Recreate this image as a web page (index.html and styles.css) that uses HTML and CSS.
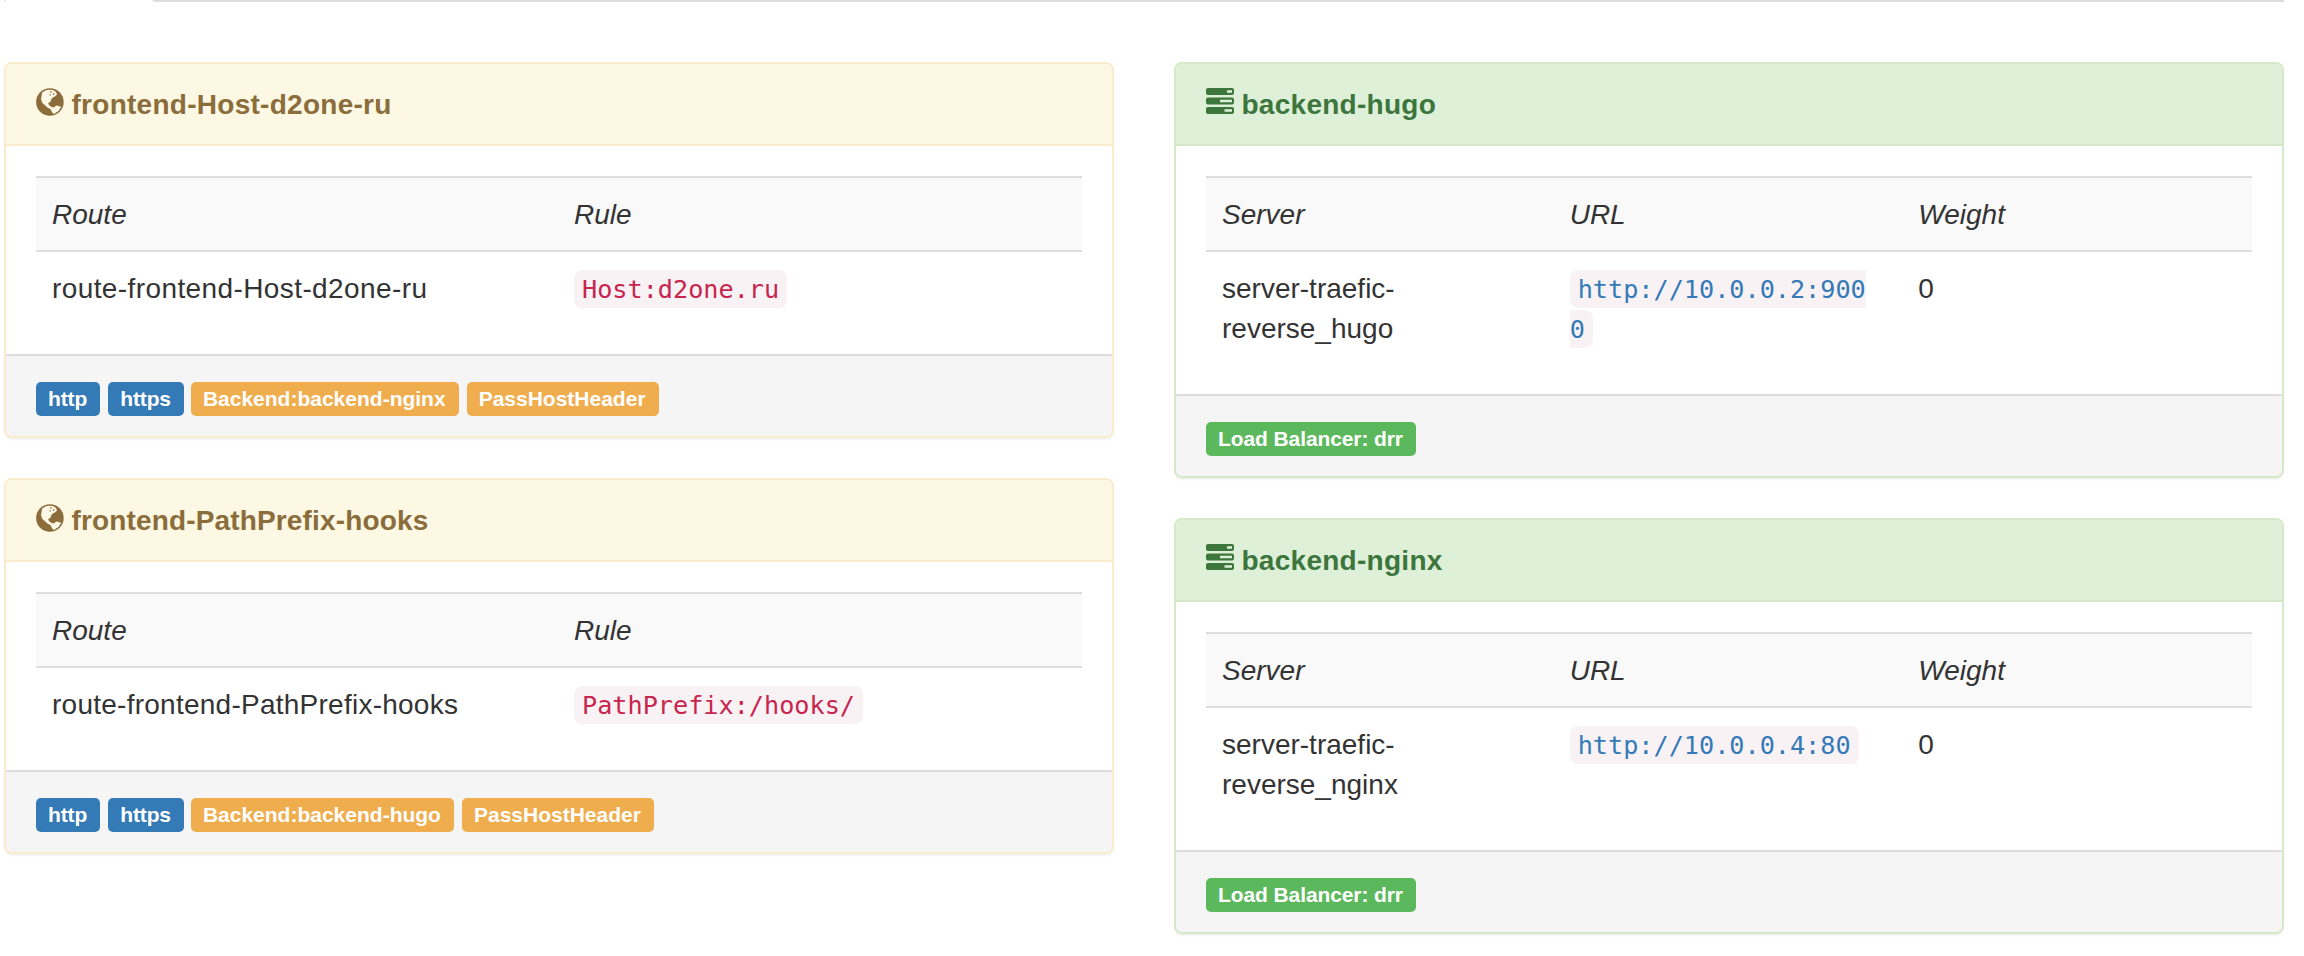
FILE: index.html
```html
<!DOCTYPE html>
<html lang="en">
<head>
<meta charset="utf-8">
<title>Providers</title>
<link rel="stylesheet" href="styles.css">
</head>
<body>
<svg class="sprite" aria-hidden="true">
  <symbol id="globe" viewBox="0 0 28 28">
    <circle cx="13.9" cy="14" r="13.8" fill="#8a6d3b"/>
    <path fill="#fcf8e3" d="M6.200 4.600 L10 2.200 L13 1.700 L17 2.100 L20 4 L21 6.400 L19 8.600 L16.800 9.400 L15.400 11 L14.600 13.600 L12.200 15.200 L12.800 16.800 L14.700 18.400 L17.500 19.400 L20.500 17.600 L25.200 18.800 L22.800 22.800 L18 26 L16.400 24.700 L14.400 20.900 L11.400 19.400 L9 17.200 L6.200 14.800 L5 11 Z"/>
    <path fill="#8a6d3b" d="M13.800 3.400h2v1.200h-2zM17 5.200h1.400v1.500H17zM13.600 6.300h1.200v1.200h-1.200z"/>
  </symbol>
  <symbol id="tasks" viewBox="0 0 28 26">
    <rect width="28" height="7" rx="2" fill="#3c763d"/>
    <rect y="9.5" width="28" height="7" rx="2" fill="#3c763d"/>
    <rect y="19" width="28" height="7" rx="2" fill="#3c763d"/>
    <path fill="#dff0d8" d="M21 2.300h5v2.400h-5zM14 11.800h12v2.400H14zM18.500 21.300h7.500v2.400h-7.500z"/>
  </symbol>
</svg>
<nav class="tabs"><div class="tab"></div><div class="rule"></div></nav>
<main class="columns">
  <div class="column">
    <section class="panel warning">
      <header class="heading"><svg class="icon"><use href="#globe"/></svg><strong>frontend-Host-d2one-ru</strong></header>
      <div class="body"><table>
        <tr class="head"><td>Route</td><td>Rule</td></tr>
        <tr><td class="route">route-frontend-Host-d2one-ru</td><td><code>Host:d2one.ru</code></td></tr>
      </table></div>
      <footer><span class="label blue">http</span><span class="label blue">https</span><span class="label orange">Backend:backend-nginx</span><span class="label orange">PassHostHeader</span></footer>
    </section>
    <section class="panel warning">
      <header class="heading long"><svg class="icon"><use href="#globe"/></svg><strong>frontend-PathPrefix-hooks</strong></header>
      <div class="body"><table>
        <tr class="head"><td>Route</td><td>Rule</td></tr>
        <tr><td class="route long">route-frontend-PathPrefix-hooks</td><td><code>PathPrefix:/hooks/</code></td></tr>
      </table></div>
      <footer><span class="label blue">http</span><span class="label blue">https</span><span class="label orange">Backend:backend-hugo</span><span class="label orange">PassHostHeader</span></footer>
    </section>
  </div>
  <div class="column">
    <section class="panel success">
      <header class="heading"><svg class="icon bars"><use href="#tasks"/></svg><strong>backend-hugo</strong></header>
      <div class="body"><table>
        <tr class="head"><td>Server</td><td>URL</td><td>Weight</td></tr>
        <tr><td>server-traefic-<br>reverse_hugo</td><td><code class="link">http://10.0.0.2:9000</code></td><td>0</td></tr>
      </table></div>
      <footer><span class="label green">Load Balancer: drr</span></footer>
    </section>
    <section class="panel success">
      <header class="heading"><svg class="icon bars"><use href="#tasks"/></svg><strong>backend-nginx</strong></header>
      <div class="body"><table>
        <tr class="head"><td>Server</td><td>URL</td><td>Weight</td></tr>
        <tr><td>server-traefic-<br>reverse_nginx</td><td><code class="link">http://10.0.0.4:80</code></td><td>0</td></tr>
      </table></div>
      <footer><span class="label green">Load Balancer: drr</span></footer>
    </section>
  </div>
</main>
</body>
</html>
```
FILE: styles.css
```css
* { box-sizing: border-box; }
body {
  margin: 0;
  height: 956px;
  overflow: hidden;
  background: #fff;
  color: #333;
  font: 28px/40px "Liberation Sans", Arial, sans-serif;
}
.sprite { display: none; }
.tabs { display: flex; height: 2px; padding: 0 20px 0 4px; }
.tab { width: 150px; height: 2px; border: solid #ddd; border-width: 0 2px 2px; border-bottom-color: #fff; }
.rule { flex: 1; background: #ddd; }
.columns {
  display: grid;
  grid-template-columns: 1110px 1110px;
  gap: 60px;
  padding: 60px 20px 0 4px;
  align-items: start;
}
.column { display: flex; flex-direction: column; gap: 40px; }
.panel { border: 2px solid; border-radius: 8px; box-shadow: 0 2px 2px rgba(0, 0, 0, .05); }
.warning { border-color: #faebcc; }
.success { border-color: #d6e9c6; }
.heading {
  display: flex;
  gap: 7.5px;
  padding: 21px 30px 19px;
  border-bottom: 2px solid;
  border-radius: 6px 6px 0 0;
  letter-spacing: .27px;
}
.heading.long { letter-spacing: .15px; }
.warning .heading { color: #8a6d3b; background: #fcf8e3; border-color: #faebcc; }
.success .heading { color: #3c763d; background: #dff0d8; border-color: #d6e9c6; }
.icon { width: 28px; height: 28px; margin-top: 3px; }
.bars { height: 26px; }
.body { padding: 30px; }
table { width: 100%; table-layout: fixed; border-collapse: separate; border-spacing: 0; }
td { padding: 17px 16px 15px 15px; border-top: 2px solid #ddd; vertical-align: top; }
td:first-child { padding-left: 16px; }
.head td { background: #f9f9f9; font-style: italic; }
.route { letter-spacing: .4px; }
.route.long { letter-spacing: .25px; }
code {
  padding: 5px 8px 4px;
  border-radius: 8px;
  background: #f9f2f4;
  color: #c7254e;
  font: 25.2px "DejaVu Sans Mono", monospace;
  word-break: break-all;
}
.link { color: #337ab7; }
footer {
  display: flex;
  gap: 8px;
  height: 82px;
  padding: 26px 30px 0;
  border-top: 2px solid #ddd;
  border-radius: 0 0 6px 6px;
  background: #f5f5f5;
}
.label {
  height: 34px;
  padding: 5px 13px 0 12px;
  border-radius: 5px;
  color: #fff;
  font-size: 21px;
  font-weight: bold;
  line-height: 23px;
  white-space: nowrap;
}
.blue { background: #337ab7; letter-spacing: -.12px; }
.orange { background: #f0ad4e; }
.blue + .orange { margin-left: -1px; }
.green { background: #5cb85c; letter-spacing: -.1px; }
```
